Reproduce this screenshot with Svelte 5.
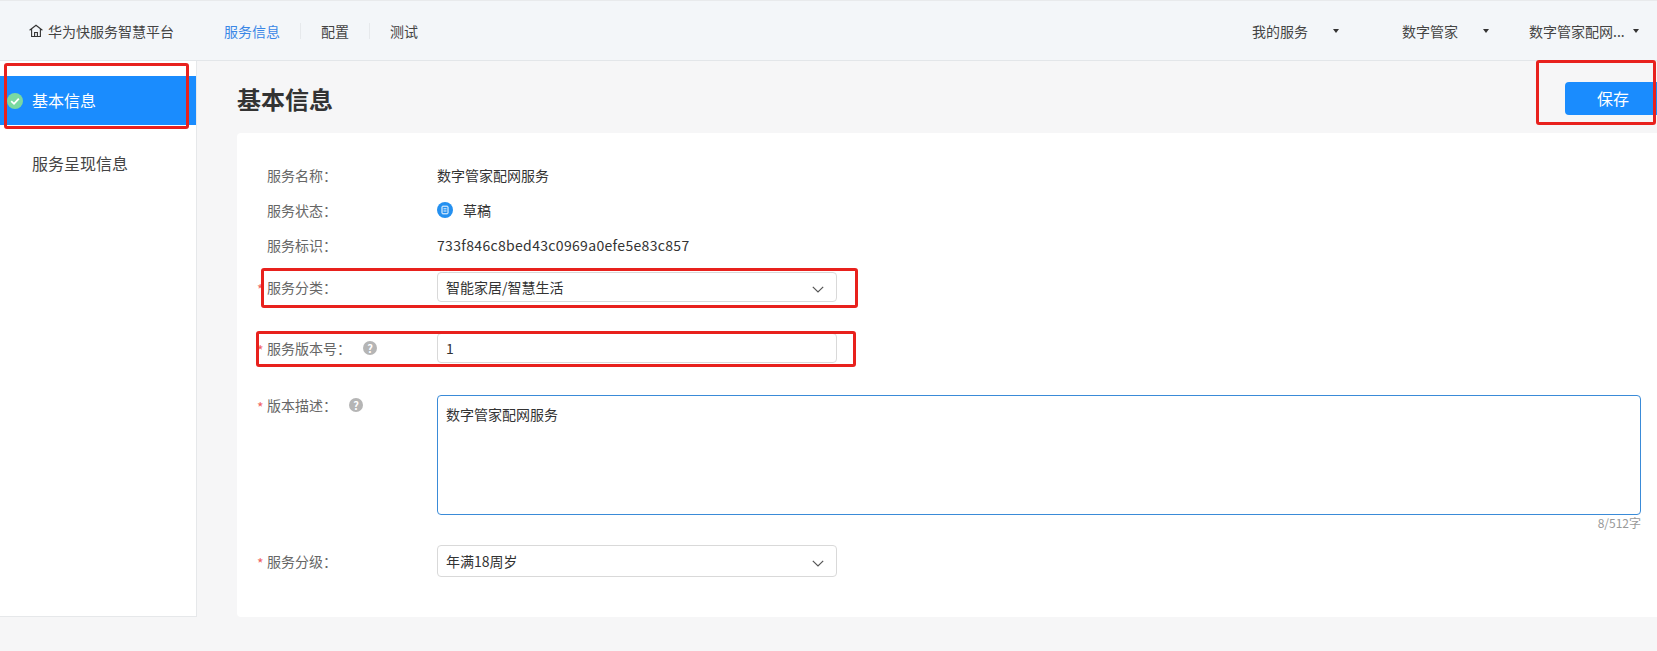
<script>
  const info = [
    { label: "服务名称：", value: "数字管家配网服务" },
    { label: "服务状态：", value: "草稿", status: true },
    { label: "服务标识：", value: "733f846c8bed43c0969a0efe5e83c857", hash: true }
  ];
  const dropdowns = ["我的服务", "数字管家", "数字管家配网..."];
</script>

<div class="page">
  <header class="topbar">
    <div class="brand">
      <svg class="home" width="14" height="14" viewBox="0 0 14 14" fill="none" stroke="#333" stroke-width="1.1">
        <path d="M0.6 6.2 L7 1.2 L13.4 6.2" />
        <path d="M2.6 5 V12.5 H11.4 V5" />
        <path d="M5.6 12.5 V8.5 H8.4 V12.5" />
      </svg>
      <span>华为快服务智慧平台</span>
    </div>
    <nav class="tabs">
      <span class="tab active">服务信息</span>
      <span class="tab">配置</span>
      <span class="tab">测试</span>
    </nav>
    <div class="menus">
      {#each dropdowns as name}
        <div class="menu">
          <span class="menu-name">{name}</span>
          <i class="caret"></i>
        </div>
      {/each}
    </div>
  </header>

  <div class="body">
    <aside class="side">
      <div class="side-item current">
        <span class="ok">
          <svg width="16" height="16" viewBox="0 0 16 16">
            <circle cx="8" cy="8" r="8" fill="#7ad9a0" />
            <path d="M4.2 8.2 L7 10.8 L11.8 5.6" fill="none" stroke="#fff" stroke-width="1.8" />
          </svg>
        </span>
        基本信息
      </div>
      <div class="side-item">服务呈现信息</div>
    </aside>

    <main class="content">
      <div class="head">
        <h1>基本信息</h1>
        <button class="save">保存</button>
      </div>

      <section class="card">
        {#each info as row}
          <div class="info-row">
            <span class="label">{row.label}</span>
            {#if row.status}
              <svg class="draft" width="16" height="16" viewBox="0 0 16 16">
                <circle cx="8" cy="8" r="8" fill="#2490f0" />
                <rect x="5" y="4.2" width="6" height="7.6" rx="0.8" fill="none" stroke="#fff" stroke-width="1" />
                <path d="M6.5 6.8 H9.5 M6.5 9 H9.5" stroke="#fff" stroke-width="0.9" />
              </svg>
            {/if}
            <span class="value" class:hash={row.hash}>{row.value}</span>
          </div>
        {/each}

        <div class="field first">
          <span class="label req">服务分类：</span>
          <div class="control select">
            <span>智能家居/智慧生活</span>
            <svg class="chev" width="12" height="7" viewBox="0 0 12 7" fill="none" stroke="#555" stroke-width="1.2"><path d="M0.8 0.8 L6 6 L11.2 0.8" /></svg>
          </div>
        </div>

        <div class="field gap">
          <span class="label req with-help">服务版本号：
            <span class="help">?</span>
          </span>
          <div class="control">1</div>
        </div>

        <div class="field gap2 top">
          <span class="label req with-help short">版本描述：
            <span class="help">?</span>
          </span>
          <div class="area-wrap">
            <div class="area">数字管家配网服务</div>
            <div class="count">8/512字</div>
          </div>
        </div>

        <div class="field last">
          <span class="label req">服务分级：</span>
          <div class="control select tall">
            <span>年满18周岁</span>
            <svg class="chev" width="12" height="7" viewBox="0 0 12 7" fill="none" stroke="#555" stroke-width="1.2"><path d="M0.8 0.8 L6 6 L11.2 0.8" /></svg>
          </div>
        </div>
      </section>
    </main>
  </div>

  <!-- red annotation boxes drawn on top of the shot -->
  <div class="mark m-side"></div>
  <div class="mark m-save"></div>
  <div class="mark m-cat"></div>
  <div class="mark m-ver"></div>
</div>

<style>
  :global(body) {
    margin: 0;
    background: #f6f6f7;
  }

  .page {
    position: relative;
    width: 1657px;
    height: 651px;
    overflow: hidden;
    font-family: "Noto Sans CJK SC", "Noto Sans", sans-serif;
    font-size: 14px;
    color: #333;
    background: #f6f6f7;
  }

  .topbar {
    display: flex;
    align-items: center;
    box-sizing: border-box;
    height: 61px;
    padding: 0 0 0 29px;
    background: #f3f6f9;
    border-top: 1px solid #e8eaec;
    border-bottom: 1px solid #e3e6e9;
    color: #444;
  }

  .brand {
    display: flex;
    align-items: center;
    gap: 5px;
    width: 195px;
  }

  .tabs {
    display: flex;
    align-items: center;
  }

  .tab {
    padding: 0 20px;
    line-height: 16px;
    border-left: 1px solid #e6e9ec;
  }

  .tab:first-child {
    padding-left: 0;
    border-left: none;
  }

  .tab.active {
    color: #3a87e6;
  }

  .menus {
    display: flex;
    margin-left: auto;
  }

  .menu {
    display: flex;
    align-items: center;
    width: 150px;
  }

  .menu:nth-child(2) {
    width: 127px;
  }

  .menu:last-child {
    width: 128px;
  }

  .menu-name {
    width: 81px;
  }

  .menu:last-child .menu-name {
    width: 104px;
  }

  .caret {
    width: 0;
    height: 0;
    border-left: 3.5px solid transparent;
    border-right: 3.5px solid transparent;
    border-top: 4px solid #333;
  }

  .body {
    display: flex;
    align-items: flex-start;
  }

  .side {
    box-sizing: border-box;
    width: 197px;
    height: 556px;
    padding-top: 15px;
    background: #fff;
    border-right: 1px solid #e6e8ea;
    border-bottom: 1px solid #e6e8ea;
    font-size: 16px;
    color: #444;
  }

  .side-item {
    position: relative;
    height: 49px;
    line-height: 49px;
    padding-left: 32px;
    margin-bottom: 14px;
  }

  .side-item.current {
    background: #1a8cfe;
    color: #fff;
  }

  .ok {
    position: absolute;
    left: 7px;
    top: 17px;
    display: flex;
  }

  .content {
    flex: 1;
    padding: 0 0 0 40px;
    min-width: 0;
  }

  .head {
    display: flex;
    align-items: center;
    justify-content: space-between;
    height: 72px;
  }

  h1 {
    margin: 2px 0 0;
    font-size: 24px;
    font-weight: 700;
    color: #333;
  }

  .save {
    width: 96px;
    height: 33px;
    margin: 2px -4px 0 0;
    border: none;
    border-radius: 4px;
    background: #1a8cfe;
    color: #fff;
    font: inherit;
    font-size: 16px;
    flex: none;
  }

  .card {
    box-sizing: border-box;
    height: 484px;
    padding: 24px 0 0 30px;
    background: #fff;
    border-radius: 4px 0 0 4px;
  }

  .info-row {
    display: flex;
    align-items: center;
    height: 35px;
  }

  .label {
    position: relative;
    width: 170px;
    flex: none;
    color: #666;
  }

  .req::before {
    content: "*";
    position: absolute;
    left: -10px;
    top: 2px;
    color: #f0625f;
  }

  .help {
    position: absolute;
    left: 96px;
    top: 3px;
    width: 14px;
    height: 14px;
    border-radius: 50%;
    background: #b5b5b5;
    color: #fff;
    font-size: 11px;
    font-weight: 700;
    line-height: 14px;
    text-align: center;
  }

  .short .help {
    left: 82px;
  }

  .draft {
    margin-right: 10px;
  }

  .value {
    color: #333;
  }

  .hash {
    letter-spacing: 0.33px;
  }

  .field {
    display: flex;
    align-items: center;
  }

  .field.top {
    align-items: flex-start;
  }

  .field.first {
    margin-top: 10px;
  }

  .field.gap {
    margin-top: 31px;
  }

  .field.gap2 {
    margin-top: 32px;
  }

  .field.last {
    margin-top: 14px;
  }

  .control {
    box-sizing: border-box;
    display: flex;
    align-items: center;
    width: 400px;
    height: 30px;
    padding: 0 8px;
    background: #fff;
    border: 1px solid #d9d9d9;
    border-radius: 4px;
    color: #333;
  }

  .select {
    justify-content: space-between;
  }

  .tall {
    height: 32px;
  }

  .chev {
    margin: 4px 4px 0 0;
  }

  .area-wrap {
    width: 1204px;
  }

  .area {
    box-sizing: border-box;
    height: 120px;
    padding: 8px;
    line-height: 20px;
    border: 1px solid #3a8bd8;
    border-radius: 4px;
    color: #333;
  }

  .count {
    height: 16px;
    font-size: 12px;
    line-height: 16px;
    text-align: right;
    color: #999;
  }

  .mark {
    position: absolute;
    box-sizing: border-box;
    border: 3px solid #e8211d;
    border-radius: 3px;
  }

  .m-side {
    left: 4px;
    top: 63px;
    width: 185px;
    height: 66px;
  }

  .m-save {
    left: 1536px;
    top: 60px;
    width: 120px;
    height: 65px;
  }

  .m-cat {
    left: 261px;
    top: 268px;
    width: 597px;
    height: 40px;
  }

  .m-ver {
    left: 256px;
    top: 331px;
    width: 600px;
    height: 36px;
  }
</style>
